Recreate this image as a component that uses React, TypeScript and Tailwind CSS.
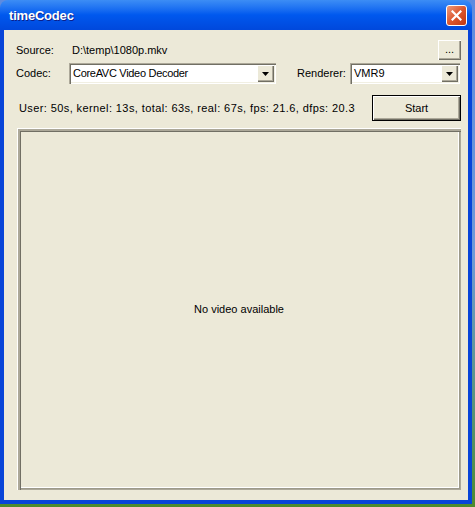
import React from "react";

// classic 3D edges on the XP beige face
const raised =
  "shadow-[inset_1px_1px_#ffffff,inset_-1px_-1px_#716f64,inset_-2px_-2px_#aca899]";
const sunken =
  "shadow-[inset_1px_1px_#aca899,inset_2px_2px_#716f64,inset_-1px_-1px_#ffffff,inset_-2px_-2px_#f1efe2]";

function Combo({ value, width, tight }: { value: string; width: string; tight?: boolean }) {
  return (
    <div className={`${width} h-[21px] bg-white ${sunken} flex items-center p-[2px]`}>
      <span className={`flex-1 pl-[2px] leading-none ${tight ? "tracking-[-0.3px]" : ""}`}>{value}</span>
      <div className={`w-[17px] h-[17px] bg-[#ece9d8] ${raised} flex items-center justify-center`}>
        <svg width="7" height="4" viewBox="0 0 7 4">
          <path d="M0 0h7L3.5 4z" fill="#000" />
        </svg>
      </div>
    </div>
  );
}

function CloseButton() {
  return (
    <div className="w-[21px] h-[21px] rounded-[3px] border border-white bg-gradient-to-br from-[#eb9a7c] via-[#dc562d] to-[#c1360f] flex items-center justify-center">
      <svg width="11" height="11" viewBox="0 0 11 11">
        <path d="M1.5 1.5l8 8M9.5 1.5l-8 8" stroke="#fff" strokeWidth="2.2" strokeLinecap="square" />
      </svg>
    </div>
  );
}

export default function App() {
  return (
    <div className="w-[475px] h-[507px] bg-gradient-to-b from-[#5d8be0] via-[#6f9ad8] to-[#4e8a2c] font-['Liberation_Sans',Arial,sans-serif] text-[11px] text-black">
      <div className="w-[472px] h-[504px] flex flex-col">
        {/* Title bar */}
        <div className="h-[30px] rounded-t-[8px] bg-gradient-to-b from-[#3c8df5] via-[#0058ee] to-[#0048dc] flex items-center pl-[9px] pr-[5px] pt-[1px]">
          <span className="text-white font-bold text-[13px] tracking-[-0.2px] [text-shadow:1px_1px_#0c1f8a]">
            timeCodec
          </span>
          <div className="ml-auto">
            <CloseButton />
          </div>
        </div>

        {/* Body */}
        <div className="flex-1 flex flex-col bg-[#ece9d8] border-l-4 border-r-4 border-b-4 border-[#0844d8] pl-[12px] pr-[7px] pt-[10px] pb-[10px]">
          <div className="h-[20px] flex items-center">
            <span className="w-[56px]">Source:</span>
            <span>D:\temp\1080p.mkv</span>
            <button className={`ml-auto w-[23px] h-[20px] bg-[#ece9d8] ${raised} flex items-end justify-center pb-[5px] leading-none`}>
              ...
            </button>
          </div>

          <div className="mt-[3px] h-[21px] flex items-center">
            <span className="w-[53px]">Codec:</span>
            <Combo value="CoreAVC Video Decoder" width="w-[207px]" tight />
            <span className="ml-[21px] w-[53px]">Renderer:</span>
            <Combo value="VMR9" width="w-[110px]" />
          </div>

          <div className="mt-[11px] h-[26px] flex items-center">
            <span className="ml-[3px] tracking-[0.4px]">
              User: 50s, kernel: 13s, total: 63s, real: 67s, fps: 21.6, dfps: 20.3
            </span>
            <button className={`ml-auto w-[89px] h-[26px] border border-black bg-[#ece9d8] ${raised}`}>
              Start
            </button>
          </div>

          <div className="mt-[7px] ml-[1px] flex-1 flex items-center justify-center shadow-[inset_1px_1px_#ffffff,inset_3px_3px_#aca899,inset_4px_4px_#716f64,inset_-1px_-1px_#aca899,inset_-2px_-2px_#9d9a8a,inset_-3px_-3px_#ffffff]">
            No video available
          </div>
        </div>
      </div>
    </div>
  );
}
